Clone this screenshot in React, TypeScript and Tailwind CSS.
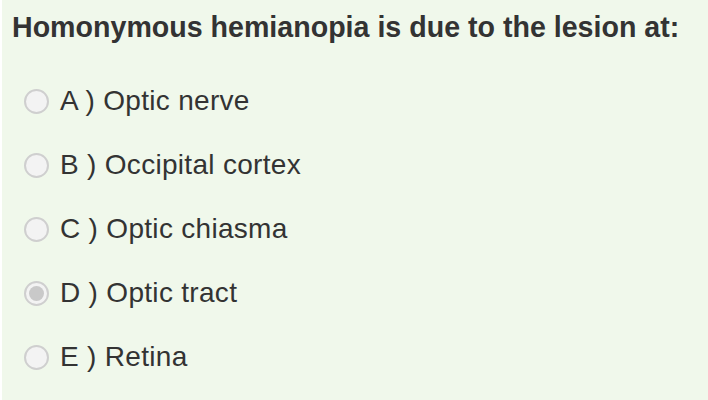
const OPTIONS = [
  { key: 'A', label: 'Optic nerve' },
  { key: 'B', label: 'Occipital cortex' },
  { key: 'C', label: 'Optic chiasma' },
  { key: 'D', label: 'Optic tract' },
  { key: 'E', label: 'Retina' },
];

export default function App() {
  const selected = 'D';
  return (
    <div className="h-[400px] w-[708px] bg-white pl-[2px]" style={{ fontFamily: '"Liberation Sans", Arial, sans-serif' }}>
      <div className="h-full bg-[#f0f8eb] text-[#333333]">
        <h1 className="pl-[10px] pt-[10px] text-[28.6px] font-bold leading-[34px]">
          Homonymous hemianopia is due to the lesion at:
        </h1>
        <div className="mt-[43px] flex flex-col gap-[36px]">
          {OPTIONS.map((o) => (
            <label key={o.key} className="flex h-[28px] items-center pl-[22px]">
              <span className="flex h-[25px] w-[25px] items-center justify-center rounded-full border-2 border-[#cfcfcf] bg-[#f3f3f3]">
                {selected === o.key && <span className="h-[15px] w-[15px] rounded-full bg-[#c9c9c9]" />}
              </span>
              <span className="ml-[11px] text-[28px] leading-[28px] tracking-[0.3px]">
                {o.key} ) {o.label}
              </span>
            </label>
          ))}
        </div>
      </div>
    </div>
  );
}
